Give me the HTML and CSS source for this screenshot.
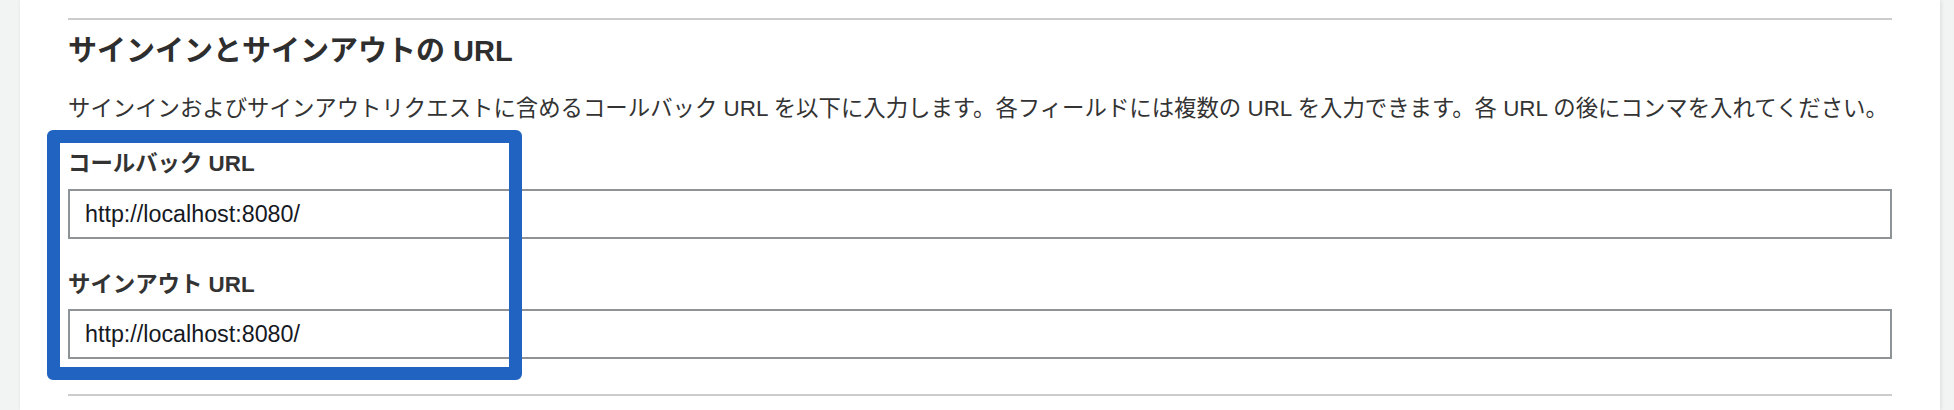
FILE: index.html
```html
<!DOCTYPE html>
<html lang="ja">
<head>
<meta charset="utf-8">
<title>サインインとサインアウトの URL</title>
<link rel="stylesheet" href="styles.css">
</head>
<body>
<div class="panel">
  <div class="rule rule-top"></div>
  <h2 class="title">サインインとサインアウトの URL</h2>
  <p class="desc">サインインおよびサインアウトリクエストに含めるコールバック URL を以下に入力します。各フィールドには複数の URL を入力できます。各 URL の後にコンマを入れてください。</p>
  <div class="field">
    <label class="field-label">コールバック URL</label>
    <input class="field-input" type="text" value="http://localhost:8080/">
  </div>
  <div class="field field-second">
    <label class="field-label">サインアウト URL</label>
    <input class="field-input" type="text" value="http://localhost:8080/">
  </div>
  <div class="rule rule-bottom"></div>
  <div class="highlight"></div>
</div>
</body>
</html>
```

FILE: styles.css
```css
html, body {
  margin: 0;
  padding: 0;
}
body {
  background: #f2f3f3;
  width: 1954px;
  height: 410px;
  overflow: hidden;
  font-family: "Liberation Sans", "Noto Sans CJK JP", sans-serif;
  color: #333333;
}
.panel {
  position: relative;
  margin-left: 20px;
  width: 1920px;
  height: 410px;
  box-sizing: border-box;
  padding: 18px 48px 0 48px;
  background: #ffffff;
  box-shadow: 1px 0 4px rgba(0, 0, 0, 0.10);
}
.rule {
  height: 2px;
  background: #cccccc;
}
.title {
  margin: 13px 0 0 0;
  font-size: 29px;
  line-height: 36px;
  font-weight: bold;
  color: #2e2e2e;
}
.desc {
  margin: 25px 0 0 0;
  font-size: 22.4px;
  line-height: 30px;
  color: #333333;
  white-space: nowrap;
}
.field {
  display: flex;
  flex-direction: column;
  margin-top: 25px;
}
.field-second {
  margin-top: 31px;
}
.field-label {
  font-size: 22.4px;
  line-height: 30px;
  font-weight: bold;
  color: #333333;
  margin-bottom: 10px;
}
.field-second .field-label {
  margin-bottom: 9px;
}
.field-input {
  box-sizing: border-box;
  width: 100%;
  height: 50px;
  margin: 0;
  border: 2px solid #8d9396;
  border-radius: 0;
  padding: 0 15px;
  font-family: "Liberation Sans", "Noto Sans CJK JP", sans-serif;
  font-size: 23.3px;
  color: #16191f;
  background: #ffffff;
  outline: none;
}
.rule-bottom {
  margin-top: 35px;
}
.highlight {
  position: absolute;
  left: 27px;
  top: 130px;
  width: 475px;
  height: 250px;
  box-sizing: border-box;
  border: 13px solid #2163c0;
  border-radius: 6px;
  pointer-events: none;
}
```
